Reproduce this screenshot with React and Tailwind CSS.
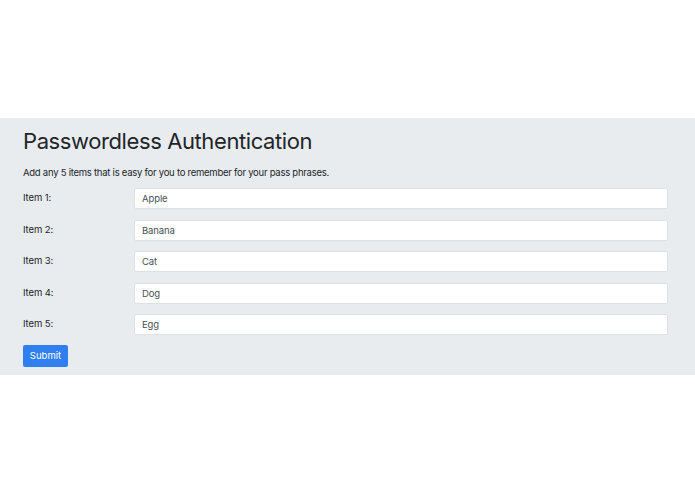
import React from 'react';

const items = ['Apple', 'Banana', 'Cat', 'Dog', 'Egg'];

const App = () => {
  return (
    <div className="w-[695px] h-[494px] bg-white font-['Inter','Liberation_Sans',Arial,sans-serif] text-[#212529]">
      <div className="h-[118px]" />
      <div className="bg-[#e9ecef] h-[257px] pl-[23px] pr-[27px] pt-[8px]">
        <h1 className="text-[22px] leading-[30px] font-normal tracking-[-0.4px]">Passwordless Authentication</h1>
        <p className="text-[9.5px] leading-[16px] mt-[9px] tracking-[-0.25px]">
          Add any 5 items that is easy for you to remember for your pass phrases.
        </p>
        <div className="mt-[7px] flex flex-col gap-[10.5px]">
          {items.map((item, i) => (
            <div key={item} className="flex items-center">
              <label className="w-[111px] text-[9.5px] tracking-[-0.1px]">Item {i + 1}:</label>
              <input
                defaultValue={item}
                className="flex-1 h-[21px] bg-white border border-[#dde1e5] rounded-[2px] px-[7px] text-[9.5px] tracking-[-0.1px] text-[#495057] outline-none"
              />
            </div>
          ))}
        </div>
        <button className="mt-[10px] w-[45px] h-[22px] bg-[#2f7ff1] text-white text-[9.5px] rounded-[2px]">
          Submit
        </button>
      </div>
    </div>
  );
};

export default App;
